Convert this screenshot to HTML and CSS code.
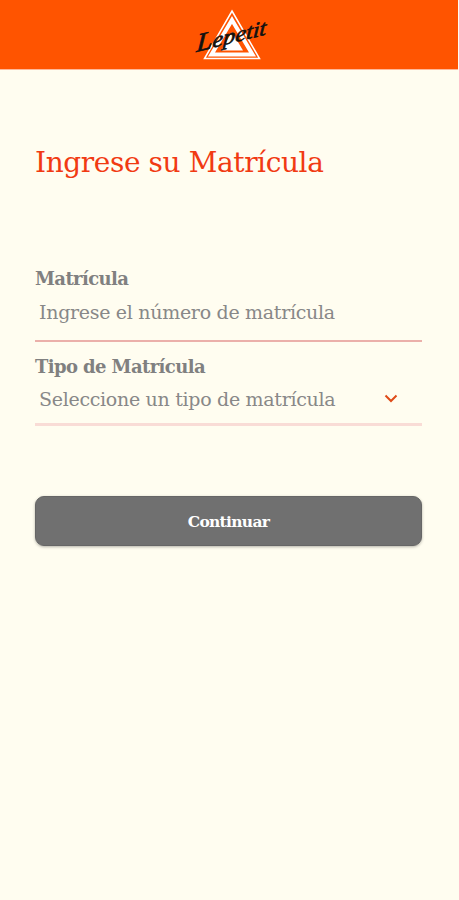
FILE: index.html
```html
<!DOCTYPE html>
<html lang="es">
<head>
    <meta charset="UTF-8">
    <meta name="viewport" content="width=device-width, initial-scale=1.0">
    <title>Lepetit</title>
    <link rel="stylesheet" href="styles.css">
</head>
<body>
<header class="page-header">
    <svg class="logo" viewBox="0 0 80 60" role="img" aria-label="Lepetit">
        <path class="logo-line" d="M40 6 L67.500 53.500 H12.500 Z"/>
        <path class="logo-band" d="M40 15 L60.500 49.500 H19.500 Z"/>
        <path class="logo-core" d="M40 27 L51 45.500 H29 Z"/>
        <text class="logo-name" transform="translate(4 47) rotate(-14) skewX(-18)" textLength="72" lengthAdjust="spacingAndGlyphs"><tspan class="logo-initial">L</tspan>epetit</text>
    </svg>
</header>
<main class="content">
    <h1>Ingrese su Matrícula</h1>
    <form>
        <div class="form-group">
            <label for="matricula">Matrícula</label>
            <input type="text" id="matricula" placeholder="Ingrese el número de matrícula">
        </div>
        <div class="form-group form-group-select">
            <label for="tipoMatricula">Tipo de Matrícula</label>
            <button type="button" class="select" id="tipoMatricula">
                <span>Seleccione un tipo de matrícula</span>
                <svg class="chevron" viewBox="0 0 14 10"><path d="M1.500 1.500 L7 7 L12.500 1.500"/></svg>
            </button>
        </div>
        <button type="submit" class="btn-submit">Continuar</button>
    </form>
</main>
</body>
</html>
```

FILE: styles.css
```css
* {
    box-sizing: border-box;
}
body {
    margin: 0;
    min-height: 100vh;
    background-color: #fffdf0;
    color: #808080;
    font-family: "Roboto Slab", "DejaVu Serif", serif;
}
.page-header {
    display: flex;
    justify-content: center;
    height: 70px;
    margin-right: 1px;
    padding-top: 5px;
    background-color: #ff5400;
    border-bottom: 1px solid #ffb899;
}
.logo {
    width: 80px;
    height: 60px;
    margin-left: 5px;
}
.logo-line {
    fill: none;
    stroke: #fff;
    stroke-width: 1.5;
}
.logo-band {
    fill: none;
    stroke: #fff;
    stroke-width: 4;
}
.logo-core {
    fill: #fff;
}
.logo-name {
    fill: #111;
    stroke: #111;
    stroke-width: 0.6;
    font-family: "Liberation Serif", cursive;
    font-size: 21px;
    font-style: italic;
}
.logo-initial {
    font-size: 25px;
}
.content {
    padding: 75px 37px 0 35px;
}
h1 {
    margin: 0;
    height: 36px;
    line-height: 36px;
    font-size: 28px;
    font-weight: normal;
    letter-spacing: -0.4px;
    white-space: nowrap;
    color: #f13a12;
}
form {
    margin-top: 84px;
}
.form-group {
    height: 77px;
    border-bottom: 2px solid #ebb0aa;
}
.form-group-select {
    height: 84px;
    border-bottom: 3px solid #f9dcd6;
}
label {
    display: block;
    height: 27px;
    line-height: 27px;
    font-size: 18px;
    font-weight: bold;
    letter-spacing: -0.6px;
}
.form-group-select label {
    padding-top: 11px;
    height: 38px;
}
input, .select {
    display: flex;
    align-items: center;
    width: 100%;
    height: 40px;
    padding: 0 24px 0 4px;
    border: none;
    outline: none;
    background: transparent;
    color: #888;
    font-family: inherit;
    font-size: 19px;
    letter-spacing: -0.3px;
}
input::placeholder {
    color: #888;
    opacity: 1;
}
.select {
    justify-content: space-between;
    height: 38px;
    white-space: nowrap;
    cursor: pointer;
}
.chevron {
    width: 14px;
    height: 10px;
    fill: none;
    stroke: #df4b18;
    stroke-width: 2;
}
.btn-submit {
    display: block;
    width: 100%;
    height: 50px;
    margin-top: 70px;
    border: 1px solid #666;
    border-radius: 9px;
    background-color: #707070;
    box-shadow: 0 1px 3px rgba(0,0,0,0.3);
    color: #fff;
    font-family: inherit;
    font-size: 15.5px;
    font-weight: bold;
    letter-spacing: -0.7px;
    cursor: pointer;
}
```
